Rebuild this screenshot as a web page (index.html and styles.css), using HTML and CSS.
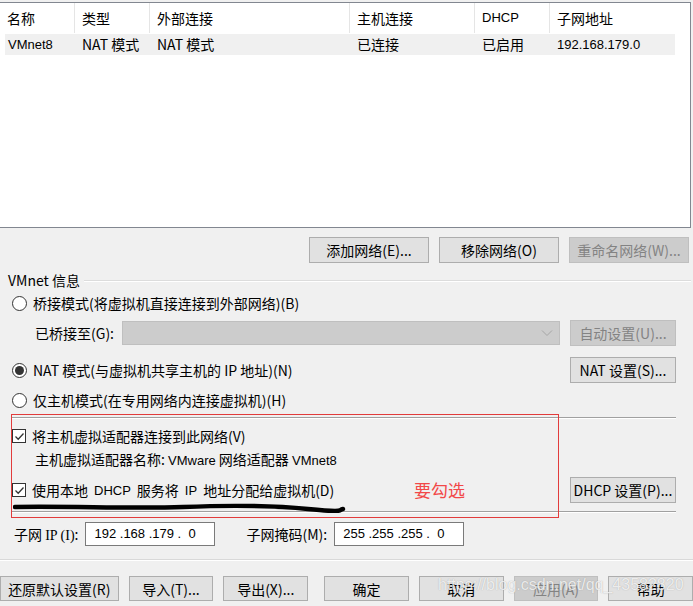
FILE: index.html
```html
<!DOCTYPE html>
<html lang="zh-CN">
<head>
    <meta charset="UTF-8">
    <title>虚拟网络编辑器</title>
    <link rel="stylesheet" href="styles.css">
</head>
<body>
    <div class="dialog">
        <div class="net-list">
            <div class="list-head">
                <div class="col c1">名称</div>
                <div class="col c2">类型</div>
                <div class="col c3">外部连接</div>
                <div class="col c4">主机连接</div>
                <div class="col c5 small">DHCP</div>
                <div class="col c6">子网地址</div>
            </div>
            <div class="list-row">
                <div class="col c1 small">VMnet8</div>
                <div class="col c2">NAT 模式</div>
                <div class="col c3">NAT 模式</div>
                <div class="col c4">已连接</div>
                <div class="col c5">已启用</div>
                <div class="col c6 small">192.168.179.0</div>
            </div>
        </div>

        <div class="net-buttons">
            <button class="btn wide">添加网络(E)...</button>
            <button class="btn wide">移除网络(O)</button>
            <button class="btn wide" disabled>重命名网络(W)...</button>
        </div>

        <div class="group">
            <div class="group-title"><span>VMnet 信息</span><i class="rule"></i></div>

            <div class="row r-bridge">
                <label class="opt"><span class="radio"></span>桥接模式(将虚拟机直接连接到外部网络)(B)</label>
            </div>
            <div class="row r-bridged-to">
                <span class="sub-label">已桥接至(G):</span>
                <div class="select">
                    <svg width="12" height="8" viewBox="0 0 12 8"><path d="M1 1.5 L6 6.5 L11 1.5" fill="none" stroke="#a6a6a6" stroke-width="1"/></svg>
                </div>
                <button class="btn side" disabled>自动设置(U)...</button>
            </div>
            <div class="row r-nat">
                <label class="opt"><span class="radio on"></span>NAT 模式(与虚拟机共享主机的 IP 地址)(N)</label>
                <button class="btn side">NAT 设置(S)...</button>
            </div>
            <div class="row r-host">
                <label class="opt"><span class="radio"></span>仅主机模式(在专用网络内连接虚拟机)(H)</label>
            </div>

            <div class="sep"></div>

            <div class="row r-check">
                <label class="opt"><span class="check"><svg width="11" height="11" viewBox="0 0 11 11"><path d="M1.5 5.5 L4.2 8.2 L9.5 2.5" fill="none" stroke="#333" stroke-width="1.3"/></svg></span>将主机虚拟适配器连接到此网络(V)</label>
            </div>
            <div class="row r-name">
                <span class="sub-label">主机虚拟适配器名称: <span class="small">VMware</span> 网络适配器 <span class="small">VMnet8</span></span>
            </div>
            <div class="row r-dhcp">
                <label class="opt"><span class="check"><svg width="11" height="11" viewBox="0 0 11 11"><path d="M1.5 5.5 L4.2 8.2 L9.5 2.5" fill="none" stroke="#333" stroke-width="1.3"/></svg></span>使用本地 <span class="small">DHCP</span> 服务将 <span class="small">IP</span> 地址分配给虚拟机(D)</label>
                <button class="btn side">DHCP 设置(P)...</button>
            </div>

            <div class="sep"></div>

            <div class="row r-subnet">
                <span class="field-label">子网 <span class="serif">IP (I)</span>:</span>
                <div class="ip-box">192 .168 .179 .  0</div>
                <span class="field-label mask">子网掩码(M):</span>
                <div class="ip-box">255 .255 .255 .  0</div>
            </div>

            <!-- annotations drawn over the screenshot -->
            <div class="mark-box"></div>
            <svg class="scribble" width="334" height="10" viewBox="0 0 334 10">
                <path d="M2 4 C 60 3, 120 6, 170 4 S 255 2, 295 6 S 324 7, 330 6" fill="none" stroke="#000" stroke-width="4.5" stroke-linecap="round"/>
            </svg>
            <span class="mark-text">要勾选</span>
        </div>

        <div class="footer-rule"></div>

        <div class="footer">
            <button class="btn reset">还原默认设置(R)</button>
            <button class="btn">导入(T)...</button>
            <button class="btn">导出(X)...</button>
            <button class="btn first-main">确定</button>
            <button class="btn">取消</button>
            <button class="btn" disabled>应用(A)</button>
            <button class="btn">帮助</button>
        </div>

        <span class="watermark">https://blog.csdn.net/qq_43582820</span>
    </div>
</body>
</html>
```

FILE: styles.css
```css
html, body {
    margin: 0;
    padding: 0;
    background: #f0f0f0;
}
body {
    font-family: "Noto Sans CJK SC", "Liberation Sans", sans-serif;
    font-size: 14px;
    color: #000;
}
.dialog {
    position: relative;
    width: 693px;
    height: 606px;
    overflow: hidden;
}
.small {
    font-family: "Liberation Sans", "Noto Sans CJK SC", sans-serif;
    font-size: 13px;
}
.serif {
    font-family: "Liberation Serif", serif;
    font-size: 14px;
}

/* network list */
.net-list {
    margin-top: 2px;
    width: 690px;
    height: 224px;
    background: #fff;
    border-top: 1px solid #828790;
    border-right: 1px solid #828790;
    border-bottom: 1px solid #828790;
}
.list-head, .list-row {
    display: flex;
}
.list-head {
    width: 675px;
    height: 30px;
}
.list-head .col {
    border-right: 1px solid #e5e5e5;
    line-height: 30px;
}
.list-row {
    width: 670px;
    height: 21px;
    margin: 1px 0 0 5px;
    background: #f0f0f0;
}
.list-row .col {
    line-height: 21px;
}
.col {
    box-sizing: border-box;
    padding-left: 7px;
    white-space: nowrap;
}
.c1 { width: 75px; }
.c2 { width: 75px; }
.c3 { width: 200px; }
.c4 { width: 125px; }
.c5 { width: 75px; }
.c6 { flex: 1; border-right: none !important; }
.list-row .c1 {
    width: 70px;
    padding-left: 3px;
}

/* buttons */
.btn {
    box-sizing: border-box;
    height: 26px;
    padding: 0;
    background: #e1e1e1;
    border: 1px solid #adadad;
    font-family: "Noto Sans CJK SC", "Liberation Sans", sans-serif;
    font-size: 14px;
    line-height: 22px;
    color: #000;
    white-space: nowrap;
}
.btn:disabled {
    background: #cccccc;
    border-color: #bfbfbf;
    color: #838383;
}
.net-buttons {
    display: flex;
    justify-content: flex-end;
    gap: 10px;
    margin-top: 9px;
    padding-right: 4px;
}
.btn.wide {
    width: 120px;
}
.btn.side {
    width: 106px;
    height: 26px;
}

/* VMnet info group */
.group {
    position: relative;
    padding: 0 17px 0 12px;
}
.group-title {
    display: flex;
    align-items: center;
    height: 20px;
    margin-top: 7px;
    margin-left: -4px;
    margin-right: -15px;
}
.group-title span {
    padding-right: 4px;
}
.group-title .rule {
    flex: 1;
    border-top: 1px solid #dcdcdc;
    border-bottom: 1px solid #fff;
    margin-top: 2px;
}
.row {
    display: flex;
    align-items: center;
    justify-content: space-between;
}
.r-bridge { height: 26px; }
.r-bridged-to { height: 34px; padding-left: 23px; }
.r-nat { height: 40px; }
.r-host { height: 20px; }
.r-check { height: 20px; }
.r-name { height: 26px; padding-left: 23px; justify-content: flex-start; }
.r-dhcp { height: 28px; margin-top: 4px; }
.r-subnet { height: 24px; margin-top: 9px; justify-content: flex-start; padding-left: 2px; }

.opt {
    display: flex;
    align-items: center;
    gap: 6px;
    white-space: nowrap;
}
.radio {
    box-sizing: border-box;
    width: 15px;
    height: 15px;
    border: 1px solid #333;
    border-radius: 50%;
    background: #fff;
    display: flex;
    align-items: center;
    justify-content: center;
}
.radio.on::after {
    content: "";
    width: 9px;
    height: 9px;
    border-radius: 50%;
    background: #333;
}
.check {
    box-sizing: border-box;
    width: 14px;
    height: 14px;
    border: 1px solid #333;
    background: #fff;
    display: flex;
    align-items: center;
    justify-content: center;
}
.sub-label {
    white-space: nowrap;
}
.select {
    box-sizing: border-box;
    width: 438px;
    height: 24px;
    margin-left: 8px;
    background: #cccccc;
    border: 1px solid #bfbfbf;
    display: flex;
    align-items: center;
    justify-content: flex-end;
    padding-right: 6px;
}
.r-bridged-to .btn.side {
    margin-left: auto;
}
.sep {
    height: 0;
    margin: 7px 0 7px 0;
    border-top: 1px solid #a0a0a0;
    border-bottom: 1px solid #fff;
}
.field-label {
    white-space: nowrap;
}
.field-label.mask {
    margin-left: 31px;
}
.ip-box {
    box-sizing: border-box;
    width: 130px;
    height: 24px;
    margin-left: 7px;
    padding-left: 8px;
    background: #fff;
    border: 1px solid #7a7a7a;
    font-family: "Liberation Sans", sans-serif;
    font-size: 13px;
    line-height: 22px;
    white-space: pre;
}

/* annotations */
.mark-box {
    position: absolute;
    left: 11px;
    top: 144px;
    width: 548px;
    height: 104px;
    border: 1px solid #e23c3c;
    box-sizing: border-box;
}
.scribble {
    position: absolute;
    left: 13px;
    top: 233px;
}
.mark-text {
    position: absolute;
    left: 414px;
    top: 207px;
    color: #f24848;
    font-size: 17px;
}

/* footer */
.footer-rule {
    margin-top: 13px;
    border-top: 1px solid #d9d9d9;
    border-bottom: 1px solid #fff;
}
.footer {
    display: flex;
    gap: 10px;
    margin-top: 15px;
}
.footer .btn {
    width: 85px;
    height: 25px;
}
.footer .btn.reset {
    width: 119px;
}
.footer .btn.first-main {
    margin-left: 6px;
}
.watermark {
    position: absolute;
    left: 438px;
    top: 576px;
    font-family: "Liberation Sans", sans-serif;
    font-size: 16px;
    color: rgba(255, 255, 255, 0.8);
    text-shadow: 0 0 1px rgba(110, 110, 110, 0.55);
    white-space: nowrap;
}
```
